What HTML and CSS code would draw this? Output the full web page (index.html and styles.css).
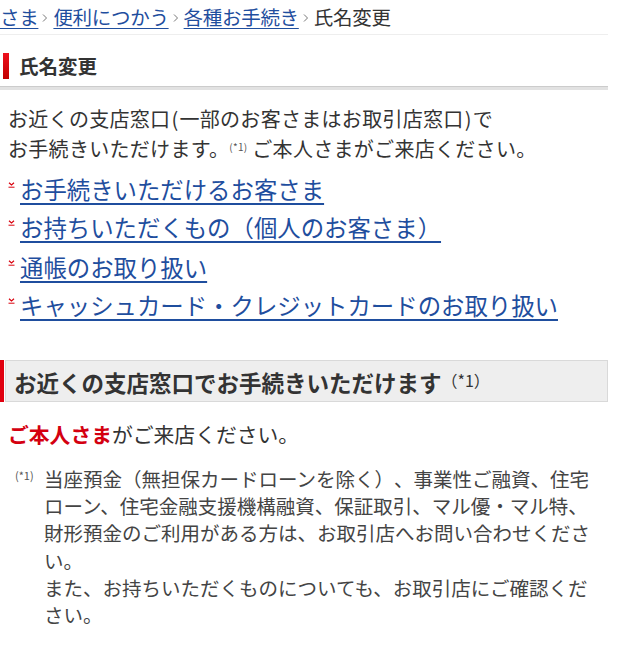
FILE: index.html
```html
<!DOCTYPE html>
<html lang="ja">
<head>
<meta charset="utf-8">
<title>氏名変更</title>
<link rel="stylesheet" href="styles.css">
</head>
<body>
<div class="page">
  <nav class="crumbs">
    <a href="#">さま</a><svg class="sep" width="6" height="10" viewBox="0 0 6 10"><path d="M1 1.5 L4.5 5 L1 8.5" fill="none" stroke="#777" stroke-width="1"/></svg><a href="#">便利につかう</a><svg class="sep" width="6" height="10" viewBox="0 0 6 10"><path d="M1 1.5 L4.5 5 L1 8.5" fill="none" stroke="#777" stroke-width="1"/></svg><a href="#">各種お手続き</a><svg class="sep" width="6" height="10" viewBox="0 0 6 10"><path d="M1 1.5 L4.5 5 L1 8.5" fill="none" stroke="#777" stroke-width="1"/></svg><span class="cur">氏名変更</span>
  </nav>

  <h1 class="title"><span class="title-text">氏名変更</span></h1>

  <p class="lead">お近くの支店窓口<span class="p">(</span>一部のお客さまはお取引店窓口<span class="p">)</span>で<br>お手続きいただけます。<span class="ref">(*1)</span> ご本人さまがご来店ください。</p>

  <ul class="links">
    <li><svg class="mk" width="7" height="6" viewBox="0 0 7 6"><path d="M1 0.8 L3.5 3 L6 0.8" fill="none" stroke="#d9000d" stroke-width="1.2"/><path d="M0.5 5.2 H6.5" stroke="#d9000d" stroke-width="1"/></svg><a href="#">お手続きいただけるお客さま</a></li>
    <li><svg class="mk" width="7" height="6" viewBox="0 0 7 6"><path d="M1 0.8 L3.5 3 L6 0.8" fill="none" stroke="#d9000d" stroke-width="1.2"/><path d="M0.5 5.2 H6.5" stroke="#d9000d" stroke-width="1"/></svg><a href="#">お持ちいただくもの（個人のお客さま）</a></li>
    <li class="gap"><svg class="mk" width="7" height="6" viewBox="0 0 7 6"><path d="M1 0.8 L3.5 3 L6 0.8" fill="none" stroke="#d9000d" stroke-width="1.2"/><path d="M0.5 5.2 H6.5" stroke="#d9000d" stroke-width="1"/></svg><a href="#">通帳のお取り扱い</a></li>
    <li><svg class="mk" width="7" height="6" viewBox="0 0 7 6"><path d="M1 0.8 L3.5 3 L6 0.8" fill="none" stroke="#d9000d" stroke-width="1.2"/><path d="M0.5 5.2 H6.5" stroke="#d9000d" stroke-width="1"/></svg><a href="#">キャッシュカード・クレジットカードのお取り扱い</a></li>
  </ul>

  <h2 class="sec"><span class="sec-box">お近くの支店窓口でお手続きいただけます<span class="sec-ref">（*1）</span></span></h2>

  <p class="visit"><strong>ご本人さま</strong>がご来店ください。</p>

  <div class="note">
    <span class="note-mark">(*1)</span>
    <p class="note-text">当座預金（無担保カードローンを除く）、事業性ご融資、住宅ローン、住宅金融支援機構融資、保証取引、マル優・マル特、財形預金のご利用がある方は、お取引店へお問い合わせください。<br>また、お持ちいただくものについても、お取引店にご確認ください。</p>
  </div>
</div>
</body>
</html>
```

FILE: styles.css
```css
html, body {
  margin: 0;
  padding: 0;
  background: #ffffff;
}

body {
  font-family: "Noto Sans CJK JP", "Noto Sans", sans-serif;
  color: #333333;
  text-spacing-trim: space-all;
}

.page {
  width: 608px;
}

.crumbs {
  display: flex;
  align-items: center;
  font-size: 19.5px;
  line-height: 26px;
  padding: 4px 0 4px 0;
  border-bottom: 1px solid #eeeeee;
  white-space: nowrap;
  letter-spacing: -0.3px;
}

.crumbs a {
  color: #1f4e9e;
  text-decoration: underline;
  text-underline-offset: 3px;
}

.crumbs .sep {
  margin: 2px 5px 0 4px;
}

.crumbs .cur {
  color: #333333;
}

.title {
  margin: 0;
  padding: 16px 0 6px 0;
  font-size: 19.5px;
  font-weight: bold;
  border-bottom: 1px solid #cccccc;
  box-shadow: 0 3px 0 #e2e2e2;
}

.title-text {
  display: inline-block;
  margin-left: 3px;
  padding-left: 10px;
  line-height: 26px;
  border-left: 6px solid #e0000f;
  border-image: linear-gradient(#f0101e, #c00000) 1;
}

.lead {
  margin: 18px 0 0 8px;
  font-size: 20px;
  line-height: 28px;
  letter-spacing: 0.3px;
}

.lead .p {
  margin: 0 1px;
}

.ref {
  font-size: 10px;
  color: #555555;
  vertical-align: 6px;
}

.links {
  list-style: none;
  margin: 7px 0 0 0;
  padding: 0;
}

.links li {
  display: flex;
  align-items: flex-start;
  font-size: 23.4px;
  line-height: 38px;
}

.links li.gap {
  margin-top: 2px;
}

.links .mk {
  margin: 12px 5px 0 8px;
  flex: none;
}

.links a {
  color: #1f4e9e;
  text-decoration: underline;
  text-decoration-thickness: 1.5px;
  text-underline-offset: 4px;
}

.sec {
  margin: 36px 0 0 0;
  padding-left: 1px;
  border-left: 4px solid #e0000f;
  font-size: 22.5px;
  font-weight: bold;
}

.sec-box {
  display: block;
  background: #eeeeee;
  border: 1px solid #d9d9d9;
  padding: 0 0 0 8px;
  line-height: 38px;
  color: #333333;
}

.sec-ref {
  font-size: 16px;
  font-weight: normal;
  vertical-align: 5px;
}

.visit {
  margin: 17px 0 0 8px;
  font-size: 20.8px;
  line-height: 30px;
}

.visit strong {
  color: #d40010;
  font-weight: bold;
}

.note {
  display: flex;
  margin: 16px 0 0 0;
  padding-left: 15px;
}

.note-mark {
  flex: none;
  width: 29px;
  font-size: 11px;
  line-height: 20px;
  color: #555555;
}

.note-text {
  margin: 0;
  width: 560px;
  font-size: 19.5px;
  line-height: 27.2px;
  color: #444444;
}
```
